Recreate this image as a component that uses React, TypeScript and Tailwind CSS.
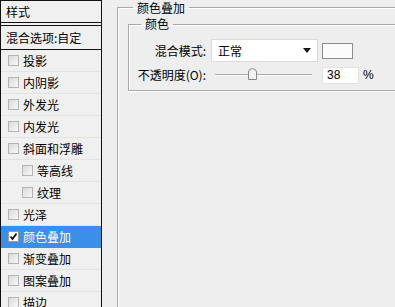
import React from 'react';

const font = { fontFamily: '"Noto Sans CJK SC", "Liberation Sans", sans-serif' };

interface Item {
    label: string;
    sub?: boolean;
    checked?: boolean;
}

const items: Item[] = [
    { label: '投影' },
    { label: '内阴影' },
    { label: '外发光' },
    { label: '内发光' },
    { label: '斜面和浮雕' },
    { label: '等高线', sub: true },
    { label: '纹理', sub: true },
    { label: '光泽' },
    { label: '颜色叠加', checked: true },
    { label: '渐变叠加' },
    { label: '图案叠加' },
    { label: '描边' },
];

function Check({ checked }: { checked?: boolean }) {
    if (checked) {
        return (
            <div className="w-[11px] h-[11px] bg-white border border-[#9a9a9a] flex items-center justify-center shrink-0">
                <svg width="9" height="9" viewBox="0 0 9 9">
                    <path d="M1.5 4.5 L3.5 7 L7.5 1.5" fill="none" stroke="#111" strokeWidth="1.8" />
                </svg>
            </div>
        );
    }
    return <div className="w-[11px] h-[11px] border border-[#b4b4b4] bg-gradient-to-br from-[#dadada] to-[#f8f8f8] shrink-0" />;
}

function StyleRow({ item }: { item: Item }) {
    return (
        <div
            className={`h-[22px] shrink-0 flex items-center gap-[4px] border-b ${item.checked ? 'bg-[#3b8fe6] text-white border-[#3b8fe6]' : 'border-[#e3e3e3] text-black'} ${item.sub ? 'pl-[21px]' : 'pl-[7px]'}`}
        >
            <Check checked={item.checked} />
            <span className="text-[12px] leading-none">{item.label}</span>
        </div>
    );
}

export default function App() {
    return (
        <div className="w-[395px] h-[307px] overflow-hidden bg-[#eeeeee] flex" style={font}>
            {/* left style list */}
            <div className="w-[102px] shrink-0 border-x border-t border-[#111] bg-[#f0f0f0] flex flex-col">
                <div className="h-[22px] shrink-0 border-b border-[#111] pl-[5px] flex items-center text-[12px] text-black">样式</div>
                <div className="h-[25px] shrink-0 mt-[2px] border-t border-b border-[#111] pl-[5px] flex items-center text-[12px] text-black">混合选项:自定</div>
                {items.map((it) => (
                    <StyleRow key={it.label} item={it} />
                ))}
            </div>

            {/* right panel */}
            <div className="flex-1 pl-[15px]">
                <fieldset className="mt-[1px] w-[300px] h-[330px] border border-[#a9a9a9] shadow-[inset_1px_1px_0_#fff]">
                    <legend className="ml-[15px] px-[4px] text-[12px] leading-[13px] text-black">颜色叠加</legend>
                    <fieldset className="ml-[10px] mt-[2px] w-[300px] h-[75px] border border-[#a9a9a9] shadow-[inset_1px_1px_0_#fff,0_1px_0_#fff]">
                        <legend className="ml-[12px] px-[4px] text-[12px] leading-[16px] text-black">颜色</legend>
                        <div className="flex items-center mt-[7px]">
                            <div className="w-[77px] text-right text-[12px] text-black">混合模式:</div>
                            <div className="ml-[5px] w-[107px] h-[23px] bg-white border border-[#dcdcdc] flex items-center pl-[6px] pr-[6px]">
                                <span className="text-[12px] text-black flex-1">正常</span>
                                <svg width="8" height="5" viewBox="0 0 8 5">
                                    <path d="M0 0 H8 L4 5 Z" fill="#111" />
                                </svg>
                            </div>
                            <div className="ml-[4px] w-[31px] h-[16px] border border-[#8c8c8c] bg-[#fbfbfb]" />
                        </div>
                        <div className="flex items-center mt-[4px]">
                            <div className="w-[77px] text-right text-[12px] text-black">不透明度(O):</div>
                            <div className="ml-[5px] w-[107px] h-[17px] relative">
                                <div className="absolute left-[4px] right-[6px] top-[7px] h-[1px] bg-[#a8a8a8] shadow-[0_1px_0_#fff]" />
                                <svg className="absolute left-[37px] top-[1px]" width="9" height="12" viewBox="0 0 9 12">
                                    <path d="M0.5 11.5 V4 Q0.5 1 4.5 0.5 Q8.5 1 8.5 4 V11.5 Z" fill="#f4f4f4" stroke="#8a8a8a" />
                                </svg>
                            </div>
                            <div className="ml-[4px] w-[37px] h-[17px] bg-white border border-[#e2e2e2] flex items-center pl-[4px] text-[12px] text-black" style={{ fontFamily: '"Liberation Sans", sans-serif' }}>38</div>
                            <span className="ml-[4px] text-[12px] text-black" style={{ fontFamily: '"Liberation Sans", sans-serif' }}>%</span>
                        </div>
                    </fieldset>
                </fieldset>
            </div>
        </div>
    );
}
